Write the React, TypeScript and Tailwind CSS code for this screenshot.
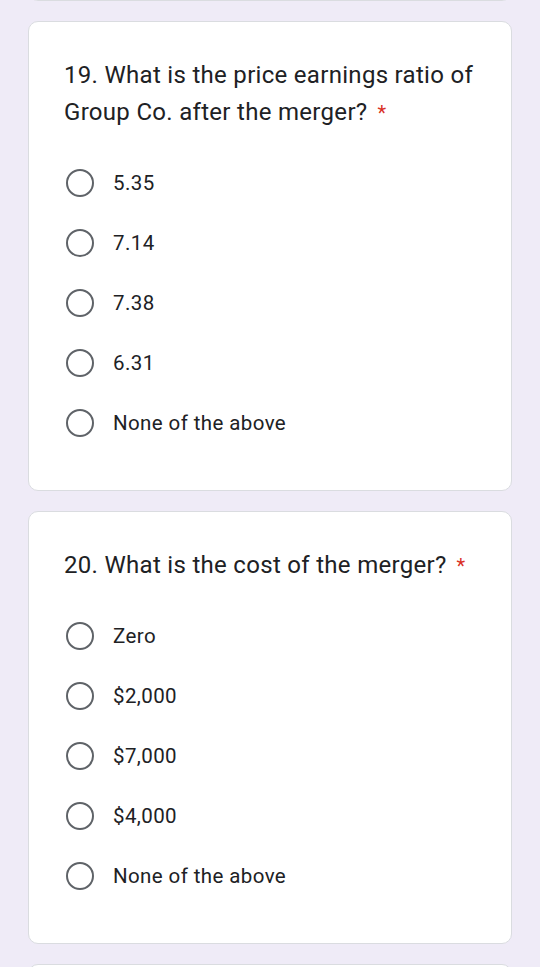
import React from "react";

type Question = {
  title: string;
  options: string[];
};

const questions: Question[] = [
  {
    title: "19. What is the price earnings ratio of Group Co. after the merger?",
    options: ["5.35", "7.14", "7.38", "6.31", "None of the above"],
  },
  {
    title: "20. What is the cost of the merger?",
    options: ["Zero", "$2,000", "$7,000", "$4,000", "None of the above"],
  },
];

function QuestionCard({ q }: { q: Question }) {
  return (
    <div className="rounded-[10px] border border-[#dadce0] bg-white pl-[35px] pr-[20px] pt-[35px] pb-[37px]">
      <div className="text-[24px] leading-[37px] tracking-[0.3px] text-[#202124] [font-family:Roboto,'Noto_Sans',sans-serif]">
        {q.title}
        <span className="ml-[10px] text-[20px] leading-[37px] text-[#d93025]">*</span>
      </div>
      <div className="mt-[21px] flex flex-col">
        {q.options.map((opt) => (
          <label key={opt} className="flex h-[60px] items-center">
            <span className="ml-[2px] h-[28px] w-[28px] shrink-0 rounded-full border-[2.5px] border-[#5f6368]" />
            <span className="ml-[19px] text-[20.5px] tracking-[0.4px] text-[#202124] [font-family:Roboto,sans-serif]">
              {opt}
            </span>
          </label>
        ))}
      </div>
    </div>
  );
}

export default function App() {
  return (
    <div className="h-screen overflow-hidden bg-[#efebf7]">
      <div className="flex flex-col gap-5 px-7">
        <div className="-mt-[20px] h-[21px] rounded-b-[10px] border border-[#dadce0] bg-white" />
        {questions.map((q) => (
          <QuestionCard key={q.title} q={q} />
        ))}
        <div className="h-[60px] rounded-t-[10px] border border-[#dadce0] bg-white" />
      </div>
    </div>
  );
}
